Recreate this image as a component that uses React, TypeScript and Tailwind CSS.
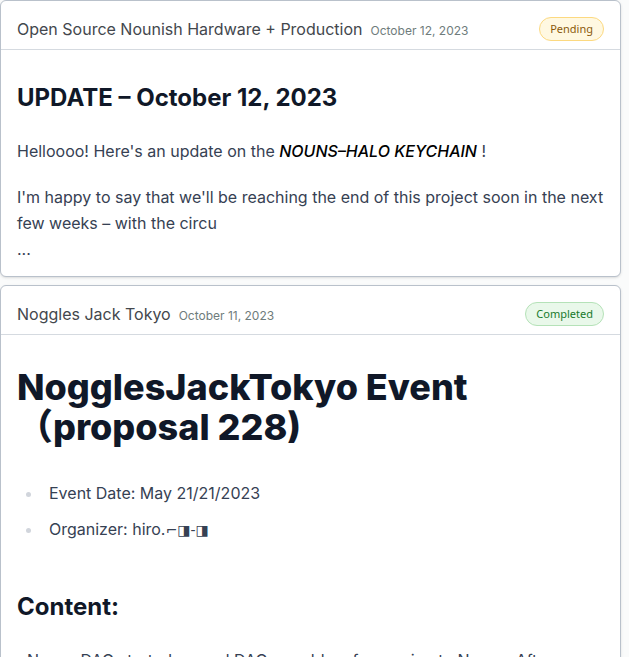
import type { ReactNode } from "react";

type Status = "pending" | "completed";

const statusStyles: Record<Status, string> = {
  pending: "border-[#fcd980] bg-[#fff8e1] text-[#8a5a0b]",
  completed: "border-[#b5e2b8] bg-[#e9f8ea] text-[#187a2c]",
};

const statusLabels: Record<Status, string> = {
  pending: "Pending",
  completed: "Completed",
};

interface UpdateCardProps {
  title: string;
  date: string;
  status: Status;
  children: ReactNode;
}

function UpdateCard({ title, date, status, children }: UpdateCardProps) {
  return (
    <article className="rounded-md border border-[#b9c1cb] bg-white shadow-sm">
      <header className="flex items-center justify-between border-b border-[#d5dae0] px-4 pt-4 pb-2">
        <div className="flex items-baseline gap-2">
          <h3 className="text-base font-normal text-[#43474d]">{title}</h3>
          <time className="text-xs text-[#6f7c7c]">{date}</time>
        </div>
        <span
          className={`rounded-full border px-2.5 py-[3px] font-['Noto_Sans',sans-serif] text-[11px] leading-4 ${statusStyles[status]}`}
        >
          {statusLabels[status]}
        </span>
      </header>
      <div className="px-4 pb-3.5 text-gray-700">{children}</div>
    </article>
  );
}

export default function App() {
  return (
    <main className="h-screen overflow-hidden bg-[#fafbfb] pr-2 font-['Inter','Noto_Sans_CJK_JP','DejaVu_Sans',sans-serif] text-base">
      <div className="flex flex-col gap-2">
        <UpdateCard title="Open Source Nounish Hardware + Production" date="October 12, 2023" status="pending">
          <h2 className="mt-8 text-2xl font-bold text-gray-900">UPDATE – October 12, 2023</h2>
          <p className="mt-6 leading-[26px]">
            Helloooo! Here's an update on the{" "}
            <strong className="font-medium text-black italic">NOUNS–HALO KEYCHAIN</strong> !
          </p>
          <p className="mt-5 leading-[26px]">
            I'm happy to say that we'll be reaching the end of this project soon in the next few weeks – with the circu
            <br />
            ...
          </p>
        </UpdateCard>
        <UpdateCard title="Noggles Jack Tokyo" date="October 11, 2023" status="completed">
          <h1 className="mt-8 text-4xl leading-10 font-extrabold text-gray-900">
            NogglesJackTokyo Event
            <br />
            （proposal 228)
          </h1>
          <ul className="mt-8 list-disc space-y-2 pl-[26px] leading-7 marker:text-gray-300">
            <li className="pl-1.5">Event Date: May 21/21/2023</li>
            <li className="pl-1.5">
              Organizer: hiro.<span className="font-['DejaVu_Sans',sans-serif] text-sm">⌐◨-◨</span>
            </li>
          </ul>
          <h2 className="mt-12 text-2xl font-bold text-gray-900">Content:</h2>
          <p className="mt-6 pl-2.5 leading-[26px]">Nouns DAO started around DAO a problem for coming to Nouns. After</p>
        </UpdateCard>
      </div>
    </main>
  );
}
